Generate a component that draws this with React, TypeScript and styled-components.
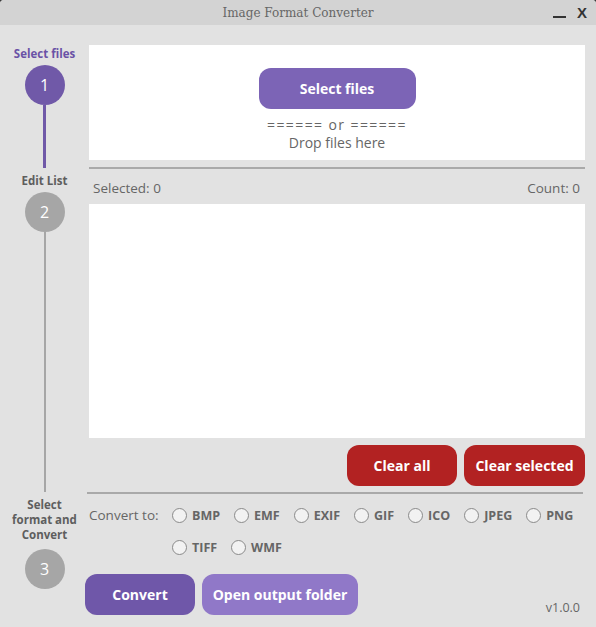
import React from "react";
import styled, { createGlobalStyle } from "styled-components";

const Global = createGlobalStyle`
  html, body { margin: 0; padding: 0; background: #3a3a3a; }
  body { font-family: "Open Sans", "Noto Sans", sans-serif; }
  * { box-sizing: border-box; }
`;

const Window = styled.div`
  width: 596px;
  height: 627px;
  background: #e2e2e2;
  border-radius: 4px 4px 0 0;
  overflow: hidden;
  display: flex;
  flex-direction: column;
`;

const TitleBar = styled.div`
  height: 25px;
  background: #d3d3d3;
  display: flex;
  align-items: center;
  justify-content: center;
  position: relative;
  font-family: "DejaVu Serif", "Liberation Serif", serif;
  font-size: 12px;
  color: #666;
`;

const WinControls = styled.div`
  position: absolute;
  right: 9px;
  top: 0;
  height: 25px;
  display: flex;
  align-items: center;
  gap: 11px;
`;

const MinBtn = styled.span`
  width: 13px;
  height: 10px;
  border-bottom: 2px solid #333;
  margin-top: 1px;
`;

const CloseBtn = styled.span`
  font-family: "Liberation Sans", Arial, sans-serif;
  font-weight: 700;
  font-size: 15px;
  color: #333;
  line-height: 1;
`;

const Body = styled.div`
  flex: 1;
  display: flex;
`;

const Sidebar = styled.div`
  width: 89px;
  display: flex;
  flex-direction: column;
  align-items: center;
  padding-top: 21px;
`;

const StepLabel = styled.div<{ $active?: boolean; $gap?: number }>`
  font-size: 11.5px;
  font-weight: 700;
  line-height: 15px;
  text-align: center;
  color: ${(p) => (p.$active ? "#6a52a6" : "#5e5e5e")};
  margin-bottom: ${(p) => p.$gap ?? 4}px;
`;

const StepCircle = styled.div<{ $active?: boolean }>`
  width: 40px;
  height: 40px;
  border-radius: 50%;
  background: ${(p) => (p.$active ? "#7059a8" : "#a6a6a6")};
  color: #fff;
  font-size: 16px;
  display: flex;
  align-items: center;
  justify-content: center;
`;

const Connector = styled.div<{ $active?: boolean; $h: number }>`
  width: ${(p) => (p.$active ? 3 : 2)}px;
  height: ${(p) => p.$h}px;
  background: ${(p) => (p.$active ? "#7059a8" : "#a6a6a6")};
  margin-bottom: 5px;
`;

const Main = styled.div`
  flex: 1;
  padding: 20px 11px 0 0;
  display: flex;
  flex-direction: column;
`;

const DropPanel = styled.div`
  height: 115px;
  background: #fff;
  display: flex;
  flex-direction: column;
  align-items: center;
  padding-top: 23px;
  color: #666;
`;

const Button = styled.button<{ $bg: string; $w: number }>`
  width: ${(p) => p.$w}px;
  height: 41px;
  border: none;
  border-radius: 12px;
  background: ${(p) => p.$bg};
  color: #fff;
  font-family: "Open Sans", sans-serif;
  font-weight: 700;
  font-size: 14px;
  padding: 0;
  cursor: pointer;
`;

const OrLine = styled.div`
  margin-top: 7px;
  font-size: 14px;
  line-height: 17px;
  letter-spacing: 1.4px;
`;

const DropText = styled.div`
  font-size: 14px;
  line-height: 20px;
`;

const Spacer = styled.div<{ $h: number }>`
  height: ${(p) => p.$h}px;
`;

const Divider = styled.div<{ $shift?: number }>`
  height: 2px;
  background: #a9a9a9;
  margin-left: ${(p) => p.$shift ?? 0}px;
  margin-right: ${(p) => -(p.$shift ?? 0)}px;
`;

const StatsRow = styled.div`
  height: 35px;
  display: flex;
  align-items: center;
  justify-content: space-between;
  padding: 2px 5px 0 4px;
  font-size: 13.5px;
  color: #666;
`;

const ListBox = styled.div`
  height: 234px;
  background: #fff;
`;

const ActionsRow = styled.div`
  display: flex;
  justify-content: flex-end;
  gap: 7px;
  margin: 7px 0 6px;
`;

const ConvertSection = styled.div`
  display: flex;
  align-items: flex-start;
  padding-top: 13px;
`;

const ConvertLabel = styled.div`
  width: 83px;
  font-size: 13.5px;
  color: #666;
  line-height: 17px;
`;

const RadioWrap = styled.div`
  flex: 1;
  display: flex;
  flex-wrap: wrap;
  column-gap: 14px;
  row-gap: 15px;
`;

const RadioItem = styled.label`
  display: flex;
  align-items: center;
  gap: 5px;
  height: 17px;
  font-size: 12.5px;
  font-weight: 700;
  color: #666;
`;

const RadioCircle = styled.span`
  width: 15px;
  height: 15px;
  border-radius: 50%;
  border: 1px solid #8a8a8a;
  background: #f2f2f2;
`;

const BottomRow = styled.div`
  display: flex;
  align-items: center;
  gap: 7px;
  margin: 18px 0 0 -4px;
`;

const Version = styled.div`
  margin-left: auto;
  align-self: flex-end;
  font-size: 12.5px;
  color: #666;
  margin-right: 5px;
  margin-bottom: -1px;
`;

const formats = ["BMP", "EMF", "EXIF", "GIF", "ICO", "JPEG", "PNG", "TIFF", "WMF"];

export default function App() {
  return (
    <>
      <Global />
      <Window>
        <TitleBar>
          Image Format Converter
          <WinControls>
            <MinBtn />
            <CloseBtn>X</CloseBtn>
          </WinControls>
        </TitleBar>
        <Body>
          <Sidebar>
            <StepLabel $active>Select files</StepLabel>
            <StepCircle $active>1</StepCircle>
            <Connector $active $h={63} />
            <StepLabel>Edit List</StepLabel>
            <StepCircle>2</StepCircle>
            <Connector $h={260} />
            <StepLabel $gap={7}>
              Select
              <br />
              format and
              <br />
              Convert
            </StepLabel>
            <StepCircle>3</StepCircle>
          </Sidebar>
          <Main>
            <DropPanel>
              <Button $bg="#7c64b6" $w={157}>Select files</Button>
              <OrLine>====== or ======</OrLine>
              <DropText>Drop files here</DropText>
            </DropPanel>
            <Spacer $h={7} />
            <Divider />
            <StatsRow>
              <span>Selected: 0</span>
              <span>Count: 0</span>
            </StatsRow>
            <ListBox />
            <ActionsRow>
              <Button $bg="#b22222" $w={110}>Clear all</Button>
              <Button $bg="#b22222" $w={121}>Clear selected</Button>
            </ActionsRow>
            <Divider $shift={-2} />
            <ConvertSection>
              <ConvertLabel>Convert to:</ConvertLabel>
              <RadioWrap>
                {formats.map((f) => (
                  <RadioItem key={f}>
                    <RadioCircle />
                    {f}
                  </RadioItem>
                ))}
              </RadioWrap>
            </ConvertSection>
            <BottomRow>
              <Button $bg="#6f57a9" $w={110}>Convert</Button>
              <Button $bg="#9078c8" $w={156}>Open output folder</Button>
              <Version>v1.0.0</Version>
            </BottomRow>
          </Main>
        </Body>
      </Window>
    </>
  );
}
